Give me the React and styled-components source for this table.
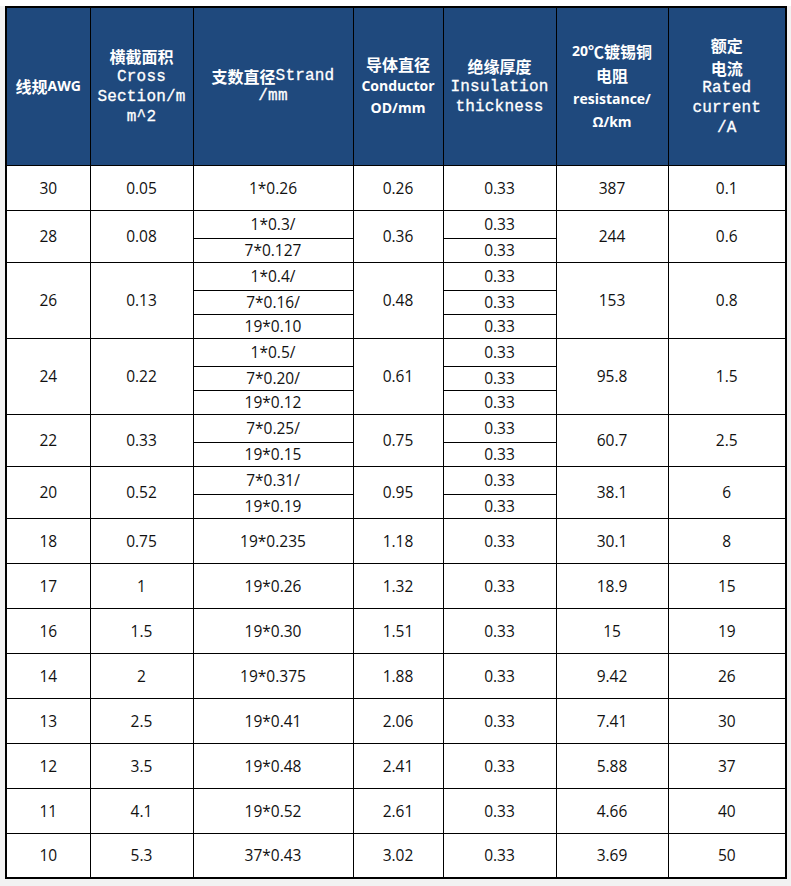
import React from "react";
import styled, { createGlobalStyle } from "styled-components";

const GlobalStyle = createGlobalStyle`
  body {
    margin: 0;
    background: #f2f2f2;
    font-family: "Open Sans", "Noto Sans CJK SC", sans-serif;
  }
`;

const Page = styled.div`
  width: 791px;
  height: 886px;
  box-sizing: border-box;
  border-top: 6px solid #ffffff;
  padding-left: 5px;
`;

const Table = styled.table`
  border-collapse: collapse;
  table-layout: fixed;
  width: 780px;
  background: #ffffff;
  border: 2px solid #000;
`;

const HeadCell = styled.th`
  background: #1f497d;
  color: #ffffff;
  font-weight: normal;
  text-align: center;
  vertical-align: middle;
  border: 1px solid #000;
  padding: 0 2px;
  line-height: ${(p) => p.$lh || 20}px;

  span {
    display: inline-block;
    vertical-align: top;
  }
`;

const Cjk = styled.span`
  font-family: "Noto Sans CJK SC", sans-serif;
  font-weight: 700;
  font-size: 16px;
  ${(p) => p.$lh && `line-height: ${p.$lh}px;`}
`;

const Mono = styled.span`
  font-family: "Liberation Mono", "Noto Sans CJK SC", monospace;
  font-size: 16px;
  letter-spacing: 0.2px;
  -webkit-text-stroke: 0.3px #ffffff;
  ${(p) => p.$lh && `line-height: ${p.$lh}px;`}
`;

const Sans = styled.span`
  font-family: "Open Sans", "Noto Sans CJK SC", sans-serif;
  font-weight: 700;
  font-size: 14px;
`;

const Row = styled.tr`
  height: ${(p) => p.$h}px;
`;

const Cell = styled.td`
  border: 1px solid #000;
  text-align: center;
  vertical-align: middle;
  font-size: 15.5px;
  color: #111111;
  padding: 0;
  line-height: 18px;
`;

const widths = [84, 103, 160, 90, 113, 112, 118];

const data = [
  ["30", "0.05", ["1*0.26"], "0.26", "387", "0.1"],
  ["28", "0.08", ["1*0.3/", "7*0.127"], "0.36", "244", "0.6"],
  ["26", "0.13", ["1*0.4/", "7*0.16/", "19*0.10"], "0.48", "153", "0.8"],
  ["24", "0.22", ["1*0.5/", "7*0.20/", "19*0.12"], "0.61", "95.8", "1.5"],
  ["22", "0.33", ["7*0.25/", "19*0.15"], "0.75", "60.7", "2.5"],
  ["20", "0.52", ["7*0.31/", "19*0.19"], "0.95", "38.1", "6"],
  ["18", "0.75", ["19*0.235"], "1.18", "30.1", "8"],
  ["17", "1", ["19*0.26"], "1.32", "18.9", "15"],
  ["16", "1.5", ["19*0.30"], "1.51", "15", "19"],
  ["14", "2", ["19*0.375"], "1.88", "9.42", "26"],
  ["13", "2.5", ["19*0.41"], "2.06", "7.41", "30"],
  ["12", "3.5", ["19*0.48"], "2.41", "5.88", "37"],
  ["11", "4.1", ["19*0.52"], "2.61", "4.66", "40"],
  ["10", "5.3", ["37*0.43"], "3.02", "3.69", "50"],
];

function Group({ awg, area, strands, od, res, cur }) {
  const n = strands.length;
  if (n === 1) {
    return (
      <Row $h={45}>
        <Cell>{awg}</Cell>
        <Cell>{area}</Cell>
        <Cell>{strands[0]}</Cell>
        <Cell>{od}</Cell>
        <Cell>0.33</Cell>
        <Cell>{res}</Cell>
        <Cell>{cur}</Cell>
      </Row>
    );
  }
  return (
    <>
      <Row $h={28}>
        <Cell rowSpan={n}>{awg}</Cell>
        <Cell rowSpan={n}>{area}</Cell>
        <Cell>{strands[0]}</Cell>
        <Cell rowSpan={n}>{od}</Cell>
        <Cell>0.33</Cell>
        <Cell rowSpan={n}>{res}</Cell>
        <Cell rowSpan={n}>{cur}</Cell>
      </Row>
      {strands.slice(1).map((s) => (
        <Row $h={24} key={s}>
          <Cell>{s}</Cell>
          <Cell>0.33</Cell>
        </Row>
      ))}
    </>
  );
}

export default function App() {
  return (
    <>
      <GlobalStyle />
      <Page>
        <Table>
          <colgroup>
            {widths.map((w, i) => (
              <col key={i} style={{ width: w }} />
            ))}
          </colgroup>
          <thead>
            <Row $h={158}>
              <HeadCell>
                <Cjk>线规</Cjk>
                <Sans>AWG</Sans>
              </HeadCell>
              <HeadCell>
                <Cjk $lh={22}>横截面积</Cjk>
                <br />
                <Mono>Cross</Mono>
                <br />
                <Mono>Section/m</Mono>
                <br />
                <Mono>m^2</Mono>
              </HeadCell>
              <HeadCell>
                <Cjk>支数直径</Cjk>
                <Mono>Strand</Mono>
                <br />
                <Mono>/mm</Mono>
              </HeadCell>
              <HeadCell $lh={22}>
                <Cjk>导体直径</Cjk>
                <br />
                <Sans>Conductor</Sans>
                <br />
                <Sans>OD/mm</Sans>
              </HeadCell>
              <HeadCell>
                <Cjk $lh={22}>绝缘厚度</Cjk>
                <br />
                <Mono>Insulation</Mono>
                <br />
                <Mono>thickness</Mono>
              </HeadCell>
              <HeadCell $lh={23}>
                <Sans>20</Sans>
                <Cjk $lh={24}>℃镀锡铜</Cjk>
                <br />
                <Cjk $lh={24}>电阻</Cjk>
                <br />
                <Sans>resistance/</Sans>
                <br />
                <Sans>Ω/km</Sans>
              </HeadCell>
              <HeadCell>
                <Cjk $lh={24}>额定</Cjk>
                <br />
                <Cjk $lh={22}>电流</Cjk>
                <br />
                <Mono $lh={19}>Rated</Mono>
                <br />
                <Mono $lh={19}>current</Mono>
                <br />
                <Mono $lh={19}>/A</Mono>
              </HeadCell>
            </Row>
          </thead>
          <tbody>
            {data.map(([awg, area, strands, od, res, cur]) => (
              <Group
                key={awg}
                awg={awg}
                area={area}
                strands={strands}
                od={od}
                res={res}
                cur={cur}
              />
            ))}
          </tbody>
        </Table>
      </Page>
    </>
  );
}
